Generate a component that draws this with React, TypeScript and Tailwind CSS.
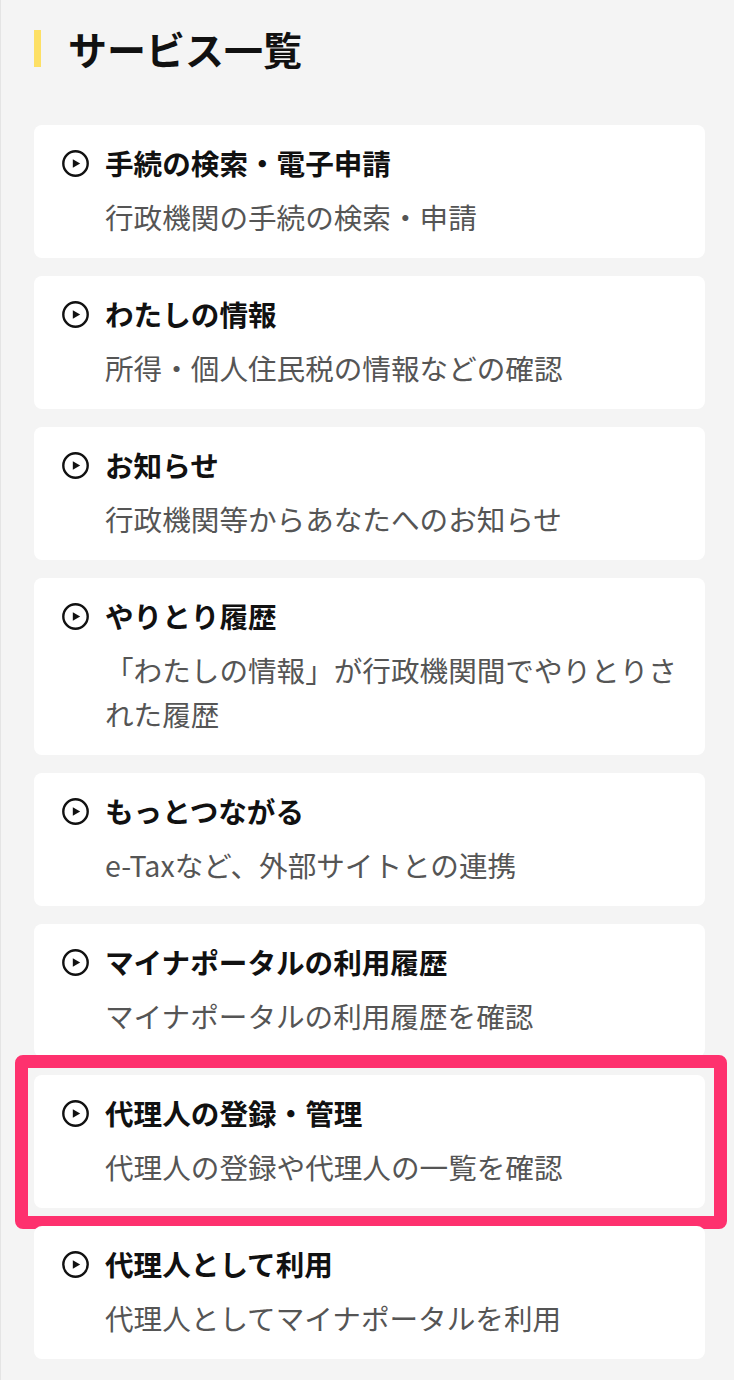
import React from 'react';

type Service = {
  title: string;
  description: string;
  highlighted?: boolean;
};

const services: Service[] = [
  { title: '手続の検索・電子申請', description: '行政機関の手続の検索・申請' },
  { title: 'わたしの情報', description: '所得・個人住民税の情報などの確認' },
  { title: 'お知らせ', description: '行政機関等からあなたへのお知らせ' },
  { title: 'やりとり履歴', description: '「わたしの情報」が行政機関間でやりとりされた履歴' },
  { title: 'もっとつながる', description: 'e-Taxなど、外部サイトとの連携' },
  { title: 'マイナポータルの利用履歴', description: 'マイナポータルの利用履歴を確認' },
  { title: '代理人の登録・管理', description: '代理人の登録や代理人の一覧を確認', highlighted: true },
  { title: '代理人として利用', description: '代理人としてマイナポータルを利用' },
];

const PlayCircle = () => (
  <svg width="27" height="27" viewBox="0 0 27 27" className="shrink-0" aria-hidden="true">
    <circle cx="13.5" cy="13.5" r="12.2" fill="none" stroke="#111" strokeWidth="2.4" />
    <polygon points="10.8,9.2 18.2,13.5 10.8,17.8" fill="#111" />
  </svg>
);

const ServiceCard = ({ service }: { service: Service }) => (
  <div className="relative">
    <a
      href="#"
      className="block rounded-[8px] bg-white pl-[28px] pr-[24px] pt-[20px] pb-[19px]"
    >
      <div className="flex items-center gap-[16px]">
        <PlayCircle />
        <span className="text-[28.6px] leading-[36px] font-bold text-[#111]">{service.title}</span>
      </div>
      <p className="mt-[14px] pl-[43px] text-[28.6px] leading-[44px] text-[#555]">
        {service.description}
      </p>
    </a>
    {/* Highlight frame drawn over the card */}
    {service.highlighted && (
      <span className="pointer-events-none absolute -left-[19px] -right-[22px] -top-[20px] -bottom-[21px] rounded-[8px] border-[13px] border-[#fe316e]" />
    )}
  </div>
);

export default function App() {
  return (
    <div
      className="min-h-[1380px] w-full border-l border-[#e4e4e4] bg-[#f4f4f4] pl-[33px] pr-[29px] pt-[24px] pb-[20px]"
      style={{ fontFamily: '"Noto Sans CJK JP", "Noto Sans", sans-serif' }}
    >
      <div className="flex h-[48px] items-center gap-[27px]">
        <span className="h-[37px] w-[7px] bg-[#fde065]" />
        <h1 className="text-[39px] leading-[48px] font-bold text-[#111]">サービス一覧</h1>
      </div>

      <div className="mt-[53px] flex flex-col gap-[18px]">
        {services.map((s) => (
          <ServiceCard key={s.title} service={s} />
        ))}
      </div>
    </div>
  );
}
